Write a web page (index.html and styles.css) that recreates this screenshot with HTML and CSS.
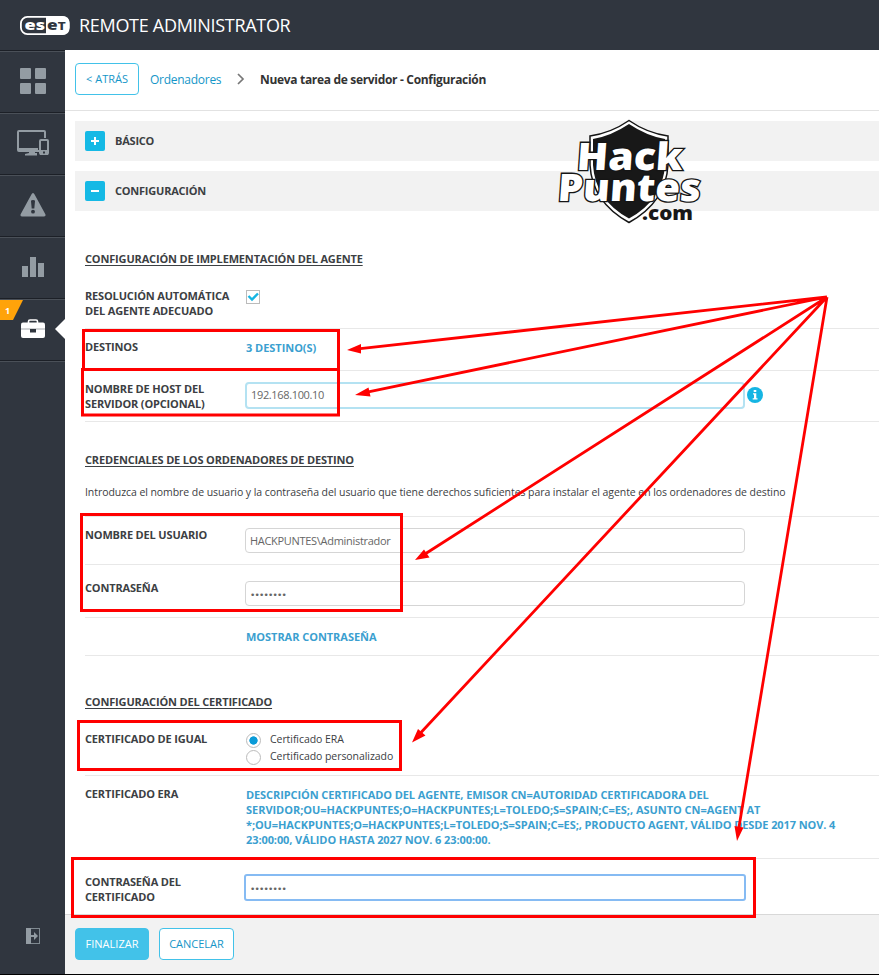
FILE: index.html
```html
<!DOCTYPE html>
<html lang="es">
<head>
<meta charset="utf-8">
<title>ESET Remote Administrator</title>
<link rel="stylesheet" href="styles.css">
</head>
<body>
<div class="app">
  <header class="topbar">
    <svg class="brand" width="50" height="28" viewBox="0 -4 50 28">
      <rect x="0.9" y="0.9" width="47.700" height="17.200" rx="6.500" fill="none" stroke="#fff" stroke-width="1.800"/>
      <path d="M26 0H42Q49.500 0 49.500 7V12Q49.500 19 42 19H26Z" fill="#fff"/>
      <text x="4.500" y="13.500" class="brand-a" textLength="20.500" lengthAdjust="spacingAndGlyphs">es</text>
      <text x="27" y="13.500" class="brand-b" textLength="19" lengthAdjust="spacingAndGlyphs">eᴛ</text>
    </svg>
    <span class="product">REMOTE ADMINISTRATOR</span>
  </header>
  <div class="body">
    <nav class="sidebar">
      <a class="nav"><svg width="26" height="26" viewBox="0 0 26 26" fill="#939ca3"><rect width="11" height="11" rx="1"/><rect x="15" width="11" height="11" rx="1"/><rect y="15" width="11" height="11" rx="1"/><rect x="15" y="15" width="11" height="11" rx="1"/></svg></a>
      <a class="nav"><svg width="32" height="26" viewBox="0 0 32 26"><path d="M22 21H2Q1 21 1 20V2Q1 1 2 1H27Q28 1 28 2V8" fill="none" stroke="#939ca3" stroke-width="2"/><path d="M1 18H21V21H1ZM12 21H18V23H20V25.500H8V24L12 23Z" fill="#939ca3"/><rect x="23" y="10" width="8" height="14" rx="1" fill="none" stroke="#939ca3" stroke-width="2"/><path d="M23 20H31V25H23Z" fill="#939ca3"/><rect x="26" y="21.500" width="2" height="2" fill="#30363f"/></svg></a>
      <a class="nav"><svg width="26" height="24" viewBox="0 0 26 24"><path d="M13 0Q14 0 14.600 1.500L25.500 21.500Q26 23.500 24 23.500H2Q0 23.500 .5 21.500L11.400 1.500Q12 0 13 0Z" fill="#939ca3"/><path d="M11 8Q11 7 13 7T15 8L14.300 15.500H11.700Z" fill="#30363f"/><circle cx="13" cy="18.700" r="1.900" fill="#30363f"/></svg></a>
      <a class="nav"><svg width="22" height="20" viewBox="0 0 22 20" fill="#939ca3"><path d="M0 9H6V20H0ZM8 0H14V20H8ZM16 6H22V20H16Z"/></svg></a>
      <a class="nav active"><svg width="24" height="19" viewBox="0 0 24 19"><path d="M7.500 4V2.500Q7.500 1 9 1H15Q16.500 1 16.500 2.500V4" fill="none" stroke="#fff" stroke-width="1.600"/><path d="M2 3.500H22Q24 3.500 24 5.500V17Q24 19 22 19H2Q0 19 0 17V5.500Q0 3.500 2 3.500Z" fill="#fff"/><path d="M0 9.500H24V10.500H0Z" fill="#a4a8ac"/><path d="M9 10H15V13.500H9Z" fill="#30363f"/></svg>
        <svg class="badge" width="23" height="20" viewBox="0 0 23 20"><path d="M0 0H23L13 20H0Z" fill="#ffa30a"/><text x="5" y="14">1</text></svg>
        <i class="pointer"></i></a>
      <a class="nav last"></a>
      <svg class="logout" width="14" height="16" viewBox="0 0 14 16"><rect x=".5" y=".5" width="13" height="15" fill="none" stroke="#7f8990"/><path d="M0 0H5V16H0ZM5 7H8V4L12 8L8 12V9H5Z" fill="#939ca3"/></svg>
    </nav>
    <main class="main">
      <div class="crumbs">
        <button class="btn back">&lt; ATRÁS</button>
        <a class="crumb">Ordenadores</a>
        <svg class="chev" width="8" height="12" viewBox="0 0 8 12"><path d="M1 1L6 6L1 11" fill="none" stroke="#777" stroke-width="1.700"/></svg>
        <strong class="current">Nueva tarea de servidor - Configuración</strong>
      </div>
      <div class="content">
        <section class="bar"><span class="toggle"><svg width="20" height="20" viewBox="0 0 20 20"><path d="M6 10H14M10 6V14" stroke="#fff" stroke-width="2"/></svg></span><span class="bar-title">BÁSICO</span></section>
        <section class="bar"><span class="toggle"><svg width="20" height="20" viewBox="0 0 20 20"><path d="M6 10H14" stroke="#fff" stroke-width="2"/></svg></span><span class="bar-title">CONFIGURACIÓN</span></section>
        <div class="form">
          <h2 class="h-agent"><u>CONFIGURACIÓN DE IMPLEMENTACIÓN DEL AGENTE</u></h2>
          <div class="row r-auto"><label>RESOLUCIÓN AUTOMÁTICA<br>DEL AGENTE ADECUADO</label><div class="field"><span class="check"><svg width="12" height="12" viewBox="0 0 12 12"><path d="M1.500 5L5 8.500L11 2.500" fill="none" stroke="#15b5e3" stroke-width="2.400"/></svg></span></div></div>
          <div class="row r-dest"><label>DESTINOS</label><div class="field link">3 DESTINO(S)</div></div>
          <div class="row r-host"><label>NOMBRE DE HOST DEL<br>SERVIDOR (OPCIONAL)</label><div class="field with-info"><div class="input host">192.168.100.10</div><svg width="16" height="16" viewBox="0 0 16 16"><circle cx="8" cy="8" r="8" fill="#15b5e3"/><path d="M6.700 3H9.300V5H6.700ZM6 6.300H9.300V11.300H10.500V12.500H5.700V11.300H7V7.500H6Z" fill="#fff"/></svg></div></div>
          <h2 class="h-cred"><u>CREDENCIALES DE LOS ORDENADORES DE DESTINO</u></h2>
          <p class="intro">Introduzca el nombre de usuario y la contraseña del usuario que tiene derechos suficientes para instalar el agente en los ordenadores de destino</p>
          <div class="row r-user"><label>NOMBRE DEL USUARIO</label><div class="field"><div class="input">HACKPUNTES\Administrador</div></div></div>
          <div class="row r-pass"><label>CONTRASEÑA</label><div class="field"><div class="input dots">••••••••</div></div></div>
          <div class="row r-show"><label></label><div class="field link">MOSTRAR CONTRASEÑA</div></div>
          <h2 class="h-cert"><u>CONFIGURACIÓN DEL CERTIFICADO</u></h2>
          <div class="row r-peer"><label>CERTIFICADO DE IGUAL</label><div class="field"><div class="option"><i class="radio on"></i>Certificado ERA</div><div class="option"><i class="radio"></i>Certificado personalizado</div></div></div>
          <div class="row r-era"><label>CERTIFICADO ERA</label><div class="field link desc">DESCRIPCIÓN CERTIFICADO DEL AGENTE, EMISOR CN=AUTORIDAD CERTIFICADORA DEL<br><span class="server">SERVIDOR;OU=HACKPUNTES;O=HACKPUNTES;L=TOLEDO;S=SPAIN;C=ES;, ASUNTO CN=AGENT AT</span><br>*;OU=HACKPUNTES;O=HACKPUNTES;L=TOLEDO;S=SPAIN;C=ES;, PRODUCTO AGENT, VÁLIDO DESDE 2017 NOV. 4<br>23:00:00, VÁLIDO HASTA 2027 NOV. 6 23:00:00.</div></div>
          <div class="row r-cpass"><label>CONTRASEÑA DEL<br>CERTIFICADO</label><div class="field"><div class="input dots focus">••••••••</div></div></div>
        </div>
      </div>
      <footer class="footer"><button class="btn primary">FINALIZAR</button><button class="btn cancel">CANCELAR</button></footer>
    </main>
  </div>
  <svg class="overlay" width="879" height="975" viewBox="0 0 879 975">
    <g class="watermark">
      <path d="M629 120.500Q647 133 668 136V165Q666 202 629 222.500Q592 202 590 165V136Q611 133 629 120.500Z" fill="#fff" stroke="#151515" stroke-width="1.500"/>
      <path d="M629 124Q647 136 665 139V165Q663 200 629 218.500Q595 200 593 165V139Q611 136 629 124Z" fill="#181818"/>
      <text transform="translate(576 170) skewX(-4)" textLength="106" lengthAdjust="spacingAndGlyphs" class="wm">Hack</text>
      <text transform="translate(557 201) skewX(-4)" textLength="143" lengthAdjust="spacingAndGlyphs" class="wm">Puntes</text>
      <text x="642" y="220" textLength="51" lengthAdjust="spacingAndGlyphs" class="wm-com">.com</text>
    </g>
    <g fill="none" stroke="#f00" stroke-width="3">
      <rect x="83.500" y="330.500" width="255" height="39"/>
      <rect x="82.500" y="369.500" width="256" height="45.500"/>
      <rect x="81.500" y="514.500" width="320" height="96"/>
      <rect x="78.500" y="721.500" width="322" height="48"/>
      <rect x="72.500" y="858.500" width="682" height="58"/>
      <path d="M827 297L358 348.800M827 297L366 392.300M827 297L425 554M827 297L421 732.500M827 297L738.500 830" stroke-width="2.800"/>
    </g>
    <path d="M347 350L361 344V353.500ZM355 395L368.500 387.500L370.500 396.500ZM415 560L424 549.500L429.500 557.500ZM412 742.500L418 729L425.500 735.500ZM737 841L734.500 826L743.500 827.500Z" fill="#f00"/>
  </svg>
</div>
</body>
</html>
```
FILE: styles.css
```css
* { box-sizing: border-box; }
body { margin: 0; font-family: "Open Sans", "Noto Sans", sans-serif; font-size: 11px; line-height: 15px; color: #3c4043; background: #fff; }
.app { position: relative; width: 879px; height: 975px; display: flex; flex-direction: column; border-bottom: 1px solid #000; overflow: hidden; }
.topbar { height: 50px; flex: none; background: #30363f; display: flex; align-items: center; padding-left: 20px; gap: 9px; color: #fff; }
.brand { flex: none; margin-top: 2px; }
.brand-a, .brand-b { font: 800 14px "Open Sans", sans-serif; fill: #fff; }
.brand-b { fill: #30363f; }
.product { font-size: 18px; letter-spacing: -0.3px; white-space: nowrap; }
.body { flex: 1; display: flex; min-height: 0; }
.sidebar { width: 65px; flex: none; background: #30363f; display: flex; flex-direction: column; }
.nav { position: relative; height: 62px; flex: none; border-top: 1px solid #1c2027; box-shadow: inset 0 1px #4a5058; display: flex; align-items: center; justify-content: center; padding: 0 0 2px 1px; }
.nav.last { height: 4px; }
.badge { position: absolute; left: 0; top: 1px; }
.badge text { font: 700 9px "Open Sans", sans-serif; fill: #fff; }
.pointer { position: absolute; right: 0; top: 20px; border: 10px solid transparent; border-right-color: #fff; border-left: 0; }
.logout { margin: auto 0 30px 26px; }
.main { flex: 1; min-width: 0; display: flex; flex-direction: column; }
.crumbs { height: 61px; flex: none; border-bottom: 1px solid #e2e2e2; display: flex; align-items: center; padding: 0 0 2px 10px; font-size: 12px; white-space: nowrap; }
.btn { height: 32px; padding: 0 0 1px; border: 1px solid #42c2e9; border-radius: 4px; background: #fff; color: #1596c8; font: 11px "Open Sans", sans-serif; }
.back { width: 64px; }
.crumb { color: #1596c8; margin-left: 11px; width: 71px; letter-spacing: -0.27px; }
.chev { margin: 0 15px 0 16px; }
.current { font-weight: 700; color: #333; letter-spacing: -0.32px; }
.content { flex: 1; min-height: 0; }
.bar { height: 40px; margin: 10px 0 0 10px; padding-left: 10px; background: #f2f2f2; display: flex; align-items: center; gap: 10px; font-weight: 700; letter-spacing: -0.22px; }
.bar-title { padding-bottom: 2px; }
.toggle { width: 20px; height: 20px; background: #15b9e5; border-radius: 2px; }
.toggle svg { display: block; }
.form { margin-left: 20px; }
h2 { margin: 0; font-size: 11px; line-height: 15px; font-weight: 700; letter-spacing: -0.16px; white-space: nowrap; }
u { text-underline-offset: 2px; }
.h-agent { height: 75px; padding-top: 40px; }
.h-cred { height: 62px; padding-top: 30px; }
.h-cert { height: 70px; padding-top: 38px; }
.intro { margin: 0; height: 33px; padding-top: 1px; white-space: nowrap; border-bottom: 1px solid #e8e8e8; font-size: 10.5px; letter-spacing: -0.065px; }
.row { display: flex; border-bottom: 1px solid #e8e8e8; }
.row label { width: 160px; flex: none; margin-top: -1px; font-weight: 700; letter-spacing: -0.16px; white-space: nowrap; }
.field { flex: none; width: 600px; }
.link { padding-left: 1px; color: #3b9fd0; font-weight: 700; letter-spacing: -0.04px; white-space: nowrap; }
.r-auto { height: 43px; padding-top: 3px; }
.r-dest { height: 42px; padding-top: 11px; }
.r-host { height: 51px; padding-top: 11px; }
.r-user { height: 48px; padding-top: 11px; }
.r-pass { height: 53px; padding-top: 16px; }
.r-show { height: 38px; padding-top: 11px; }
.r-peer { height: 50px; padding-top: 6px; }
.r-era { height: 83px; padding-top: 11px; }
.r-cpass { height: 55px; padding-top: 16px; border: 0; }
.desc { letter-spacing: -0.09px; }
.server { letter-spacing: -0.03px; }
.check { display: block; width: 14px; height: 14px; margin: 1px 0 0 1px; border: 1px solid #bbb; }
.check svg { display: block; }
.input { width: 500px; height: 25px; border: 1px solid #d5d5d5; border-radius: 4px; padding-left: 4px; line-height: 24px; letter-spacing: -0.3px; color: #666; white-space: nowrap; }
.host { height: 27px; border: 2px solid #b4e2f2; line-height: 22px; letter-spacing: -0.35px; }
.with-info { display: flex; align-items: center; gap: 2px; height: 27px; margin-top: -0.5px; }
.dots { font-family: "DejaVu Sans", sans-serif; font-size: 9px; letter-spacing: -0.8px; line-height: 26px; }
.focus { width: 502px; height: 27px; margin: -1px 0 0 -1px; border: 2px solid #86bbf3; border-radius: 3px; }
.option { display: flex; align-items: center; height: 17px; gap: 9px; font-size: 10.5px; letter-spacing: -0.06px; }
.option:first-child { margin-top: -1px; }
.radio { width: 15px; height: 15px; margin-left: 1px; border: 1px solid #bbb; border-radius: 50%; position: relative; top: 1px; }
.radio.on { background: radial-gradient(circle, #0a9bd8 0 3.8px, #fff 4.5px); }
.footer { height: 60px; flex: none; background: #f2f2f2; border-top: 1px solid #d8d8d8; padding: 13px 10px; display: flex; gap: 10px; }
.primary { width: 74px; background: #42c2e9; color: #fff; }
.cancel { width: 75px; }
.overlay { position: absolute; left: 0; top: 0; pointer-events: none; }
.wm { font: 800 38px "Open Sans", sans-serif; fill: #fff; stroke: #151515; stroke-width: 2.6px; paint-order: stroke; }
.wm-com { font: 800 19px "Open Sans", sans-serif; fill: #181818; }
```
